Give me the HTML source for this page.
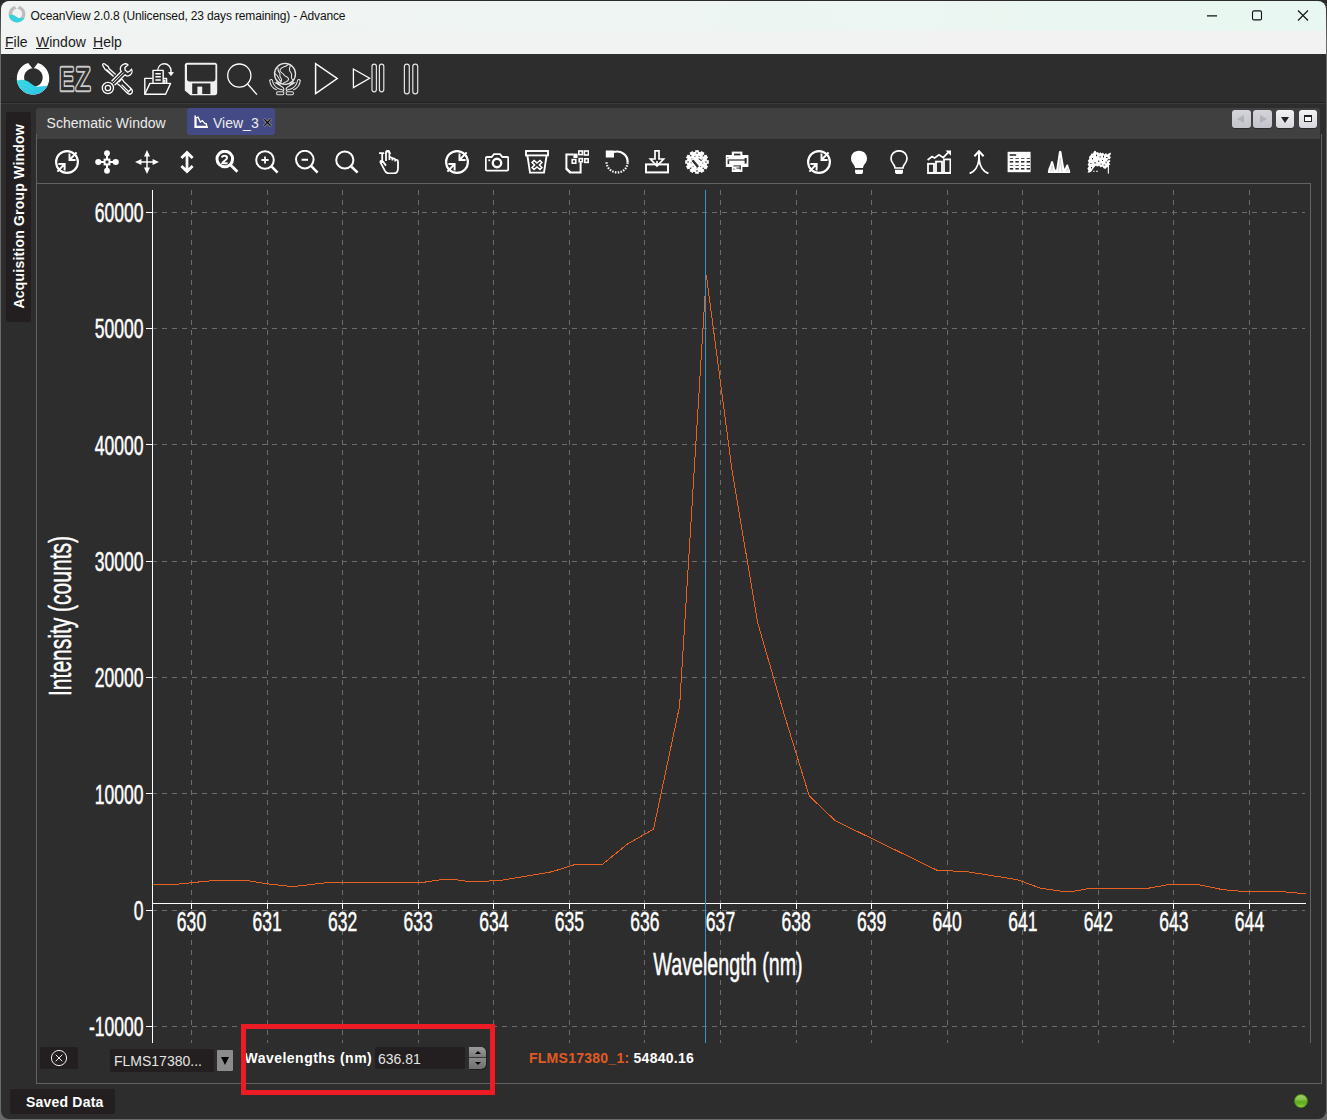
<!DOCTYPE html>
<html><head><meta charset="utf-8"><title>OceanView</title>
<style>
html,body{margin:0;padding:0}
body{width:1327px;height:1120px;overflow:hidden;background:linear-gradient(#2b2b2b 0,#2b2b2b 2px,#6a6a6a 40px,#6a6a6a 100%);font-family:"Liberation Sans",sans-serif;position:relative}
.abs{position:absolute}
#win{position:absolute;left:1px;top:1px;width:1325px;height:1118px;border-radius:8px;background:#2d2d2d;overflow:hidden}
#title{position:absolute;left:0;top:0;width:1325px;height:30px;background:linear-gradient(90deg,#f1f4f3 0%,#eef5f2 50%,#e8f7f1 100%)}
#title .t{position:absolute;left:29.6px;top:8px;font-size:12px;color:#111;white-space:nowrap;letter-spacing:-0.15px}
#menu{position:absolute;left:0;top:30px;width:1325px;height:23px;background:linear-gradient(90deg,#f0f3f2 0%,#f1f2f2 40%,#f2f2f2 100%)}
#menu span{position:absolute;top:3px;font-size:14px;color:#1a1a1a}
#menu u{text-decoration:underline;text-underline-offset:1px}
#tb{position:absolute;left:0;top:53px;width:1325px;height:48px;background:#2d2d2d;border-bottom:1px solid #222;box-shadow:0 1px 0 #3c3c3c}
#side{position:absolute;left:5px;top:111px;width:25px;height:210px;background:#231f20;border-radius:2px}
#side span{position:absolute;left:0;top:0;transform-origin:0 0;transform:translate(5px,196.5px) rotate(-90deg);font-weight:bold;font-size:14px;color:#fff;white-space:nowrap;letter-spacing:0.2px}
#tabs{position:absolute;left:35px;top:107px;width:1284px;height:31px;background:#404040;border-radius:3px 3px 0 0}
#panel{position:absolute;left:36px;top:138px;width:1285px;height:945px;background:#2d2d2d}
#tabs .tl{position:absolute;top:7px;font-size:14px;color:#ececec;white-space:nowrap}
#atab{position:absolute;left:151px;top:0;width:88px;height:27px;background:#444a85;border-radius:3px}
#atab .tl{top:7px}
.nb{position:absolute;top:2px;height:18px;background:linear-gradient(#d4d4da,#c4c4cc);border-radius:3px;box-shadow:0 1px 0 #2a2a2a}
.nb.w{background:linear-gradient(#f4f4f6,#d6d6dc)}
.nb i{position:absolute;display:block}
.tri-l{left:5px;top:5px;border:4px solid transparent;border-right:7px solid #b2b2b8;border-left:0}
.tri-r{left:7px;top:5px;border:4px solid transparent;border-left:7px solid #b2b2b8;border-right:0}
.tri-d{left:5px;top:7px;border:4px solid transparent;border-top:6px solid #222;border-bottom:0}
.sq{left:5px;top:5px;width:6px;height:4px;border:1px solid #222;border-top-width:2px;background:#fff}
.ln{background:#636363}
.ax{stroke:#fff;stroke-width:0.4px;vector-effect:non-scaling-stroke}
.chart{position:absolute;left:0;top:0}
.dk{background:#231f20;border-radius:2px}
</style></head><body>
<div id="win">
 <div id="title"><svg class="abs" style="left:1200px;top:5px" width="120" height="20" viewBox="0 0 120 20" fill="none" stroke="#111" stroke-width="1.1"><path d="M6 9.9H16"/><rect x="51.5" y="4.9" width="9" height="9" rx="1.5"/><path d="M97 4.5L107 14.5M107 4.5L97 14.5"/></svg>
<svg class="abs" style="left:6px;top:3px" width="20" height="20" viewBox="0 0 20 20"><defs><clipPath id="tc"><circle cx="10" cy="10" r="8.4"/></clipPath></defs><path fill="#bdbdbd" fill-rule="evenodd" d="M10 1.6a8.4 8.4 0 1 0 0.01 0ZM10.2 4.8a4.9 4.9 0 1 1 -0.01 0Z"/><path fill="#eff4f3" d="M6.8 1L10 5.2L13.2 1Z"/><g clip-path="url(#tc)"><path fill="#36d3df" d="M1 11.6C3.6 10.2 6 10.4 8.4 12C10.4 13.6 11.8 14.4 13.8 14.2C15.6 14 17 13.8 19 13.6V19H1Z"/></g></svg>
<span class="t">OceanView 2.0.8 (Unlicensed, 23 days remaining) - Advance</span></div>
 <div id="menu"><span style="left:4px"><u>F</u>ile</span><span style="left:35px"><u>W</u>indow</span><span style="left:92px"><u>H</u>elp</span></div>
 <div id="tb"><svg class="abs" style="left:-1px;top:0" width="430" height="48" viewBox="0 54 430 48" fill="none" stroke="#fff" stroke-width="1.4" font-family="'Liberation Sans', sans-serif">
<defs><linearGradient id="wv" x1="0" y1="0" x2="1" y2="1"><stop offset="0" stop-color="#35dce0"/><stop offset="1" stop-color="#2bbde8"/></linearGradient><clipPath id="lc"><circle cx="33" cy="78.4" r="16.2"/></clipPath></defs>
<g stroke="none" fill="#1c1c1c"><rect x="9.6" y="78" width="1.2" height="1.2"/><rect x="12" y="78" width="1.2" height="1.2"/></g>
<g stroke="none"><path fill="#fff" fill-rule="evenodd" d="M33 62.2a16.2 16.2 0 1 0 0.01 0ZM33.4 68.2a9.3 9.3 0 1 1 -0.01 0Z"/><path fill="#2d2d2d" d="M26.6 61L33.1 69.2L39.4 61Z"/><g clip-path="url(#lc)"><path fill="url(#wv)" d="M15 81.6C20 79 25 79 29.6 82.4C33.4 85.4 36 87.2 40 86.6C43.4 86.2 46.4 85.8 50 85.6V96H15Z"/><path d="M18 85C24 83 29 86 33 90M17 88C23 86 28 89 31 93" stroke="#5fe4ea" stroke-width="0.6" fill="none" opacity="0.7"/></g></g>
<text transform="translate(59.4,90.05) scale(0.676,1)" font-size="31.5" fill="#2d2d2d" stroke="#c8c8c8" stroke-width="4" stroke-linejoin="round" paint-order="stroke" vector-effect="non-scaling-stroke">E</text>
<text transform="translate(76.0,90.05) scale(0.73,1)" font-size="31.5" fill="#2d2d2d" stroke="#c8c8c8" stroke-width="4" stroke-linejoin="round" paint-order="stroke" vector-effect="non-scaling-stroke">Z</text>
<text transform="translate(59.4,90.05) scale(0.676,1)" font-size="31.5" fill="#2d2d2d" stroke="#2d2d2d" stroke-width="0.6" stroke-linejoin="round" vector-effect="non-scaling-stroke">E</text>
<text transform="translate(76.0,90.05) scale(0.73,1)" font-size="31.5" fill="#2d2d2d" stroke="#2d2d2d" stroke-width="0.6" stroke-linejoin="round" vector-effect="non-scaling-stroke">Z</text>
<g stroke-width="1.3"><path d="M102.6 65.2C102.2 64.2 103.4 63.2 104.4 63.8L108.4 66.6L109 68.6L115.6 74.6M113.6 76.4L107.2 70.2L105.2 69.6Z"/><path d="M102.6 65.2L105.2 69.6"/><path d="M118.6 82.2L121.4 79.4M117.2 83.4L119.6 85.4L127.2 93C128.6 94.4 130.4 94.4 131.6 93.2C132.8 92 132.6 90.2 131.4 89L123.6 81.4L122 79"/><path d="M121.6 84.6L128.4 91.4M127.4 92.8L131.2 89"/><path d="M111.6 81.2L121.2 71.4C119.6 69.4 120.2 66.6 122 65.2C123.8 63.8 126.4 63.4 128 65L125 67.4V69.9L127.6 72.2L130.3 70.7L131.4 69.2C132.6 70.6 132.2 73.2 130.4 74.8C128.8 76.2 126.6 76.4 125 74.8L114.6 85.2"/><path d="M112.8 83.4L123.6 72.6" stroke-width="1"/><circle cx="107.9" cy="88" r="5.6"/><circle cx="107.9" cy="88" r="2.7"/></g>
<g stroke-width="1.4" stroke-linejoin="round"><path d="M152.6 78.4H144.8V94.2M163.4 78.4H166.6V83"/><path d="M149.9 83.4H170.6L165.6 94.2H144.8Z"/><path d="M153 83V70.4H163.2V83"/><path d="M155.4 73.8H160.8M155.4 76.8H160.8M155.4 80H160.8" stroke-width="1.5"/><path d="M157.8 70.2C158 66 161 63.8 164.4 63.8C168 63.8 170.8 66.6 171 70.6V74.4"/><path d="M168.6 72.6L171 75.6L173.4 72.6Z" fill="#fff" stroke-width="0.8"/><path d="M163.6 79.4H165.6V83H163.6Z" fill="#e8e8e8" stroke="none"/></g>
<g stroke="none"><path fill="#f0f0f0" d="M187.2 62.8H214.8C216.2 62.8 217.2 63.8 217.2 65.2V92.8C217.2 94.2 216.2 95.2 214.8 95.2H190.4L184.8 90.6V65.2C184.8 63.8 185.8 62.8 187.2 62.8Z"/><path fill="#2d2d2d" d="M187 64.8H215.4V79C215.4 80.4 214.4 81.4 213 81.4H189.4C188 81.4 187 80.4 187 79Z"/><rect fill="#2d2d2d" x="192.2" y="83.4" width="18.2" height="10.6"/><rect fill="#f0f0f0" x="197.4" y="86.6" width="4.8" height="7.6"/></g>
<circle cx="239.3" cy="75.6" r="11.6" stroke-width="1.3"/><path d="M247.6 84L257 94.6" stroke-width="1.3"/>
<g stroke="#e6e6e6" stroke-width="1.05" stroke-linecap="round" stroke-linejoin="round"><circle cx="285" cy="73.9" r="10.5" stroke-width="1.3"/><path d="M288.6 64.4C287 65.6 285.6 66.4 283.4 67C281.6 67.6 280.6 68.6 280 70C279.6 71.4 280.6 72 281.6 72.6C283 73.4 283.6 74.4 284.6 75.6C285.8 76.6 287.6 77 288.4 78.4C289 79.6 287.8 80.8 286.4 81.6C285 82.4 283.6 82.6 283 83.6"/><path d="M278 68C277.6 70 278.6 71.6 279.6 72.8C280.4 74 279.6 75.2 280 76.4C280.4 77.6 281.6 78.4 281.6 79.8C281.6 81 281 81.8 280.6 82.6"/><path d="M290.4 65C290 67 289 68.6 289.6 70.4C290 72 291.4 72.6 291.6 74.2C291.8 75.8 291 77 291.6 78.4C292 79.4 292.8 79.8 293.2 80.2"/><path d="M275 73.6C276.6 74.6 277.6 75.8 278.4 77.4C279 78.8 279.4 80 280.6 81"/><path d="M269.8 80.4C270.6 79 272.6 79.4 272.6 81C273 84 274.6 86.4 277.6 88.2C280.6 89.8 283.6 89.6 283.8 91"/><path d="M269.8 80.4C270 84.6 272.6 88 276.4 89.8M275 82.6C277 83.8 279.6 85.6 281.6 86.4C283.4 87.2 284 88.4 283.8 90M276.4 82L280.4 85.2"/><path d="M300.2 80.4C299.4 79 297.4 79.4 297.4 81C297 84 295.4 86.4 292.4 88.2C289.4 89.8 286.4 89.6 286.2 91"/><path d="M300.2 80.4C300 84.6 297.4 88 293.6 89.8M295 82.6C293 83.8 290.4 85.6 288.4 86.4C286.6 87.2 286 88.4 286.2 90M293.6 82L289.6 85.2"/><rect x="276.6" y="91.8" width="7.2" height="2.9" rx="1.2"/><rect x="286.2" y="91.8" width="7.2" height="2.9" rx="1.2"/></g>
<path d="M315.6 63.6V93.6L337.2 78.5Z" stroke-width="1.5" stroke-linejoin="miter"/>
<path d="M353.4 69V87.6L369.6 78.2Z" stroke-width="1.3"/>
<g stroke="#e4e4e4" stroke-width="1.2"><rect x="372" y="64.2" width="4.4" height="27.6" rx="2.2"/><rect x="379.4" y="64.2" width="4.4" height="27.6" rx="2.2"/><rect x="404.4" y="64.2" width="4.9" height="29.6" rx="2.4"/><rect x="412.8" y="64.2" width="4.9" height="29.6" rx="2.4"/></g>
</svg></div>
 <div id="side"><span>Acquisition Group Window</span></div>
 <div id="tabs">
  <span class="tl" style="left:10.6px">Schematic Window</span>
  <div id="atab"><svg class="abs" style="left:7px;top:7px" width="15" height="14" viewBox="0 0 15 14"><path d="M1.2 0.5V12.3H14" fill="none" stroke="#fff" stroke-width="1.6"/><path d="M2 11.5V3L4 2.2L6.3 7L8.3 5.6L11 8.6L12.3 8.6L12.8 11.5Z" fill="none" stroke="#fff" stroke-width="1.3"/></svg><span class="tl" style="left:26px">View_3</span>
   <svg class="abs" style="left:76px;top:10px" width="9" height="9" viewBox="0 0 9 9"><path d="M1 1L8 8M8 1L1 8" stroke="#9a9a9a" stroke-width="2.6"/><path d="M1.3 1.3L7.7 7.7M7.7 1.3L1.3 7.7" stroke="#111" stroke-width="1.3"/></svg></div>
  <div class="nb" style="left:1196px;width:19px;border-radius:3px"><i class="tri-l"></i></div>
  <div class="nb" style="left:1216.5px;width:19px;border-radius:3px"><i class="tri-r"></i></div>
  <div class="nb w" style="left:1240px;width:18px"><i class="tri-d"></i></div>
  <div class="nb w" style="left:1263px;width:18px"><i class="sq"></i></div>
 </div>
 <div id="panel">
<svg class="abs" style="left:18px;top:11px" width="24" height="24" viewBox="0 0 24 24"><g fill="none" stroke="#fff" stroke-width="2" ><circle cx="12" cy="12" r="10.9" stroke-width="2.2"/><path d="M14.5 3.6V10H20.6M14.8 9.7L21.6 2.4M3.4 14H9.6V20.4M9.3 14.3L2.4 21.6"/></g></svg>
<svg class="abs" style="left:58px;top:11px" width="24" height="24" viewBox="0 0 24 24"><g fill="none" stroke="#fff" stroke-width="2" ><rect x="9.6" y="9.6" width="4.8" height="4.8"/></g><g fill="#fff"><ellipse cx="12" cy="3.2" rx="2.9" ry="3"/><rect x="11" y="5" width="2" height="4"/><ellipse cx="12" cy="20.8" rx="2.9" ry="3"/><rect x="11" y="15" width="2" height="4"/><ellipse cx="3.3" cy="12" rx="3.1" ry="2.9"/><rect x="5" y="11" width="4" height="2"/><ellipse cx="20.7" cy="12" rx="3.1" ry="2.9"/><rect x="15" y="11" width="4" height="2"/></g></svg>
<svg class="abs" style="left:98px;top:11px" width="24" height="24" viewBox="0 0 24 24"><g fill="none" stroke="#fff" stroke-width="1.5"><path d="M12 2V22M2 12H22"/></g><g fill="#fff"><path d="M12 0l3 6.4H9zM12 24l3-6.4H9zM0 12l6.4-3v6zM24 12l-6.4-3v6z"/></g></svg>
<svg class="abs" style="left:138px;top:11px" width="24" height="24" viewBox="0 0 24 24"><g fill="none" stroke="#fff" stroke-width="2.8" ><path d="M12 3V21M6.4 8L12 2.4L17.6 8M6.4 16L12 21.6L17.6 16"/></g></svg>
<svg class="abs" style="left:178px;top:11px" width="24" height="24" viewBox="0 0 24 24"><g fill="none" stroke="#fff" stroke-width="2" ><circle cx="9.8" cy="9" r="7.8" stroke-width="3"/><path d="M15.6 15L22.4 21.8" stroke-width="2.8"/><path d="M6.8 7.6C7.4 5.2 12 5 12 8C12 10 8.4 10.8 7.4 13.2H12.6" stroke-width="2"/></g></svg>
<svg class="abs" style="left:218px;top:11px" width="24" height="24" viewBox="0 0 24 24"><g fill="none" stroke="#fff" stroke-width="2" ><circle cx="10" cy="10" r="8.8"/><path d="M16.2 16.2L22.6 22.6" stroke-width="2.6"/><path d="M6.4 10H13.6M10 6.4V13.6" stroke-width="1.8"/></g></svg>
<svg class="abs" style="left:258px;top:11px" width="24" height="24" viewBox="0 0 24 24"><g fill="none" stroke="#fff" stroke-width="2" ><circle cx="9.8" cy="9.6" r="8.8"/><path d="M16.0 15.8L22.6 22.6" stroke-width="2.6"/><path d="M6.6 9.8H13" stroke-width="1.9"/></g></svg>
<svg class="abs" style="left:298px;top:11px" width="24" height="24" viewBox="0 0 24 24"><g fill="none" stroke="#fff" stroke-width="2" ><circle cx="9.8" cy="10" r="8.6"/><path d="M16.0 16.2L22.6 22.6" stroke-width="2.6"/></g></svg>
<svg class="abs" style="left:338px;top:11px" width="24" height="24" viewBox="0 0 24 24"><g fill="none" stroke="#fff" stroke-width="1.8" ><path d="M7.2 13V2.6M4 3.2H9M11 11V2.4C11 0.2 14.4 0.2 14.4 2.4V10M12.7 0.8L10 3.8M12.7 0.8L15.6 3.8M14.4 8.6C14.4 6.8 17.4 6.8 17.4 8.8V10.6M17.4 9.6C17.4 8 20.2 8 20.2 10V11.6M20.2 10.8C20.4 9.4 23 9.6 23 11.6V18C23 21 21.4 23.4 18.6 23.4H14C12 23.4 10.8 22.4 9.8 20.6L5.6 12.6C4.8 11 6.8 10 7.8 11.4L11 15.6"/></g></svg>
<svg class="abs" style="left:408px;top:11px" width="24" height="24" viewBox="0 0 24 24"><g fill="none" stroke="#fff" stroke-width="2" ><circle cx="12" cy="12" r="10.9" stroke-width="2.2"/><path d="M14.5 3.6V10H20.6M14.8 9.7L21.6 2.4M3.4 14H9.6V20.4M9.3 14.3L2.4 21.6"/></g></svg>
<svg class="abs" style="left:448px;top:11px" width="24" height="24" viewBox="0 0 24 24"><g fill="none" stroke="#fff" stroke-width="1.8" ><path d="M1.8 7H6.6L9 4.2H15L17.4 7H22.2C22.8 7 23.2 7.4 23.2 8V19.6C23.2 20.2 22.8 20.6 22.2 20.6H1.8C1.2 20.6 0.8 20.2 0.8 19.6V8C0.8 7.4 1.2 7 1.8 7Z"/><circle cx="12" cy="13" r="4.2" stroke-width="2.4"/></g><rect x="3.4" y="9.4" width="1.8" height="1.8" fill="#fff"/></svg>
<svg class="abs" style="left:488px;top:11px" width="24" height="24" viewBox="0 0 24 24"><g fill="none" stroke="#fff" stroke-width="1.9" ><rect x="1" y="1" width="22" height="4.4"/><path d="M2.4 5.4L5 22.6H19L21.6 5.4"/><path d="M9 10.4l3 2.6 3-2.6 2 2-2.6 2.6 2.6 2.6-2 2-3-2.6-3 2.6-2-2 2.6-2.6-2.6-2.6z" stroke-width="1.5"/></g></svg>
<svg class="abs" style="left:528px;top:11px" width="24" height="24" viewBox="0 0 24 24"><g fill="none" stroke="#fff" stroke-width="2" ><path d="M8.6 4.6H1.4V19L5 22.6H15.6V12.4"/><path d="M1.4 18.4L5.6 22.4" /></g><g fill="none" stroke="#fff" stroke-width="1.6" ><rect x="13.8" y="1" width="3.6" height="3.6"/><rect x="19.4" y="1" width="4" height="4"/><rect x="19.8" y="8.8" width="3.4" height="3.6"/><rect x="14.2" y="8.6" width="3.2" height="3.2"/><rect x="9.2" y="4.4" width="2.6" height="2.8"/><rect x="7.2" y="9.6" width="3.6" height="3.6"/></g></svg>
<svg class="abs" style="left:568px;top:11px" width="24" height="24" viewBox="0 0 24 24"><g fill="none" stroke="#fff" stroke-width="2" ><path d="M8 2.2C16 -0.4 23 5 22.6 12.4" stroke-width="2.2"/><path d="M22.6 12.4C22.4 19 17 23 11.4 22.4C5.6 21.8 1.4 17.4 1.6 11.6" stroke-width="2.2" stroke-dasharray="1.5 1.3"/></g><path d="M0.8 0.6L9 0.6V7.4H0.8z" fill="#fff"/></svg>
<svg class="abs" style="left:608px;top:11px" width="24" height="24" viewBox="0 0 24 24"><g fill="none" stroke="#fff" stroke-width="2" ><path d="M10 0.8H14V9H18.6L12 16L5.4 9H10z" stroke-width="1.7"/><rect x="1" y="14.4" width="22" height="8"/></g><path d="M12 11v4" stroke="#fff" stroke-width="1.6"/></svg>
<svg class="abs" style="left:648px;top:11px" width="24" height="24" viewBox="0 0 24 24"><circle cx="12" cy="12" r="10.4" fill="#fff"/><g fill="#fff"><rect x="10.2" y="0.2" width="3.6" height="3" transform="rotate(0 12 12)"/><rect x="10.2" y="0.2" width="3.6" height="3" transform="rotate(30 12 12)"/><rect x="10.2" y="0.2" width="3.6" height="3" transform="rotate(60 12 12)"/><rect x="10.2" y="0.2" width="3.6" height="3" transform="rotate(90 12 12)"/><rect x="10.2" y="0.2" width="3.6" height="3" transform="rotate(120 12 12)"/><rect x="10.2" y="0.2" width="3.6" height="3" transform="rotate(150 12 12)"/><rect x="10.2" y="0.2" width="3.6" height="3" transform="rotate(180 12 12)"/><rect x="10.2" y="0.2" width="3.6" height="3" transform="rotate(210 12 12)"/><rect x="10.2" y="0.2" width="3.6" height="3" transform="rotate(240 12 12)"/><rect x="10.2" y="0.2" width="3.6" height="3" transform="rotate(270 12 12)"/><rect x="10.2" y="0.2" width="3.6" height="3" transform="rotate(300 12 12)"/><rect x="10.2" y="0.2" width="3.6" height="3" transform="rotate(330 12 12)"/></g><g fill="#2d2d2d"><path d="M6.4 10.8l2.2-1 5.4 6.4-1.8 1.6z"/><path d="M14 8.2l3 2.2-.6.8-3-2.2z"/><rect x="11.5" y="2.3" width="1.1" height="1.6" transform="rotate(0 12 12)"/><rect x="11.5" y="2.3" width="1.1" height="1.6" transform="rotate(45 12 12)"/><rect x="11.5" y="2.3" width="1.1" height="1.6" transform="rotate(90 12 12)"/><rect x="11.5" y="2.3" width="1.1" height="1.6" transform="rotate(135 12 12)"/><rect x="11.5" y="2.3" width="1.1" height="1.6" transform="rotate(180 12 12)"/><rect x="11.5" y="2.3" width="1.1" height="1.6" transform="rotate(225 12 12)"/><rect x="11.5" y="2.3" width="1.1" height="1.6" transform="rotate(270 12 12)"/><rect x="11.5" y="2.3" width="1.1" height="1.6" transform="rotate(315 12 12)"/><rect x="11.6" y="5.6" width="0.9" height="0.9" transform="rotate(20 12 12)"/><rect x="11.6" y="5.6" width="0.9" height="0.9" transform="rotate(60 12 12)"/><rect x="11.6" y="5.6" width="0.9" height="0.9" transform="rotate(100 12 12)"/><rect x="11.6" y="5.6" width="0.9" height="0.9" transform="rotate(140 12 12)"/><rect x="11.6" y="5.6" width="0.9" height="0.9" transform="rotate(180 12 12)"/><rect x="11.6" y="5.6" width="0.9" height="0.9" transform="rotate(220 12 12)"/><rect x="11.6" y="5.6" width="0.9" height="0.9" transform="rotate(260 12 12)"/><rect x="11.6" y="5.6" width="0.9" height="0.9" transform="rotate(300 12 12)"/><rect x="11.6" y="5.6" width="0.9" height="0.9" transform="rotate(340 12 12)"/></g></svg>
<svg class="abs" style="left:688px;top:11px" width="24" height="24" viewBox="0 0 24 24"><g fill="#fff"><rect x="0.8" y="5" width="22.6" height="12" /><rect x="6.8" y="1.6" width="10.6" height="4"/><rect x="6.8" y="14" width="10.6" height="8"/></g><g fill="#2d2d2d"><rect x="9" y="3.6" width="6.4" height="1.8"/><rect x="2.6" y="9.4" width="19" height="1.2"/><rect x="2.6" y="10.6" width="1.6" height="3.4"/><rect x="19.6" y="8" width="2" height="5.6"/><rect x="2.4" y="7" width="1" height="1"/><rect x="8.4" y="15.4" width="7.6" height="1"/><rect x="8.4" y="18.6" width="1" height="1.2"/><rect x="11.4" y="17.6" width="4" height="1"/><rect x="14.6" y="16" width="1.2" height="3.6"/></g></svg>
<svg class="abs" style="left:770px;top:11px" width="24" height="24" viewBox="0 0 24 24"><g fill="none" stroke="#fff" stroke-width="2" ><circle cx="12" cy="12" r="10.9" stroke-width="2.2"/><path d="M14.5 3.6V10H20.6M14.8 9.7L21.6 2.4M3.4 14H9.6V20.4M9.3 14.3L2.4 21.6"/></g></svg>
<svg class="abs" style="left:810px;top:11px" width="24" height="24" viewBox="0 0 24 24"><path d="M12 0.8C7 0.8 4 4.4 4 8.4C4 11.4 5.6 13 6.8 14.8C7.6 16 8 17 8 18H16C16 17 16.4 16 17.2 14.8C18.4 13 20 11.4 20 8.4C20 4.4 17 0.8 12 0.8Z" fill="#fff"/><path d="M8 19.8H16V22C16 23.4 15 24 14 24H10C9 24 8 23.4 8 22Z" fill="#fff"/></svg>
<svg class="abs" style="left:850px;top:11px" width="24" height="24" viewBox="0 0 24 24"><path d="M12 0.8C7 0.8 4 4.4 4 8.4C4 11.4 5.6 13 6.8 14.8C7.6 16 8 17 8 18H16C16 17 16.4 16 17.2 14.8C18.4 13 20 11.4 20 8.4C20 4.4 17 0.8 12 0.8Z" fill="none" stroke="#fff" stroke-width="1.7"/><path d="M8 19.8H16V22C16 23.4 15 24 14 24H10C9 24 8 23.4 8 22Z" fill="#fff"/></svg>
<svg class="abs" style="left:890px;top:11px" width="24" height="24" viewBox="0 0 24 24"><g fill="none" stroke="#fff" stroke-width="1.8" ><rect x="1" y="13.8" width="6" height="9"/><rect x="9" y="11.6" width="6" height="11.2"/><rect x="17" y="9.4" width="6.4" height="13.4"/><path d="M0.4 23H24" /><path d="M0.6 10L5 6.6L7.6 8L12 4.8L16.2 7.6L22 1.6" stroke-width="1.7"/></g><path d="M18.6 0.4H24V5.8z" fill="#fff"/></svg>
<svg class="abs" style="left:930px;top:11px" width="24" height="24" viewBox="0 0 24 24"><g fill="none" stroke="#fff" stroke-width="1.9" ><path d="M12 1.6V10M7.4 6.2L12 1.2L16.6 6.2" stroke-width="2"/><path d="M12 9C11.4 16 7.6 21.6 2.6 23.4M12 9C12.6 16 16.4 21.6 21.4 23.4"/></g></svg>
<svg class="abs" style="left:970px;top:11px" width="24" height="24" viewBox="0 0 24 24"><rect x="0.6" y="1.8" width="23" height="20.4" fill="#fff"/><g fill="#2d2d2d"><rect x="2.6" y="4.2" width="6.6" height="1.6"/><rect x="2.8" y="8" width="3.4" height="0.8"/><rect x="2.8" y="11" width="3.4" height="1.6"/><rect x="2.8" y="15" width="3.4" height="0.8"/><rect x="2.8" y="18" width="3.4" height="1.6"/><rect x="8.399999999999999" y="8" width="3.4" height="0.8"/><rect x="8.399999999999999" y="11" width="3.4" height="1.6"/><rect x="8.399999999999999" y="15" width="3.4" height="0.8"/><rect x="8.399999999999999" y="18" width="3.4" height="1.6"/><rect x="14.0" y="8" width="3.4" height="0.8"/><rect x="14.0" y="11" width="3.4" height="1.6"/><rect x="14.0" y="15" width="3.4" height="0.8"/><rect x="14.0" y="18" width="3.4" height="1.6"/><rect x="19.599999999999998" y="8" width="3.4" height="0.8"/><rect x="19.599999999999998" y="11" width="3.4" height="1.6"/><rect x="19.599999999999998" y="15" width="3.4" height="0.8"/><rect x="19.599999999999998" y="18" width="3.4" height="1.6"/></g></svg>
<svg class="abs" style="left:1010px;top:11px" width="24" height="24" viewBox="0 0 24 24"><path d="M0.8 23L1.4 19L3.2 14.6L4.2 11.2H5.8L7 15L8 19.4L9.2 19.8L10.4 12L12 1.6L13.2 0.8L14.4 1.6L15.6 9L17 17L17.8 19L19 15.4L20 14.6H21L22 18L23.2 21V23Z" fill="#fff"/><path d="M3.6 21.6L5 15.6L6.2 21.6M11.4 21.6L13.2 8L15 21.6M19.4 21.6L20.5 18L21.4 21.6" stroke="#cfcfcf" stroke-width="0.9" fill="none"/></svg>
<svg class="abs" style="left:1050px;top:11px" width="24" height="24" viewBox="0 0 24 24"><path fill="#fff" d="M7 1.2L8.6 0.8L9.4 2.4L11 2L12 3.4L13.4 2.2L14.6 3.6L16 2.6L17.2 4.4L19 3L20 4.6L23.6 2.4L24 4L22.6 6L24 7.6L22 9.4L23.6 11L21.8 12.6L23.4 14.2L21.6 15.6V16.8L19.6 17.4L18.4 19L16.6 18.2L15.4 16.6L13.6 17.6L12.4 15.8L10.4 16.6L8.6 15.8L7 17.4L5.6 19.4L4.4 21.4L2.6 22.6H0.6L1.4 20.4L0.4 18.4L1.8 16.6L0.6 14.6L1.8 12.8L0.8 10.6L2.4 9L2 6.8L3.6 5.6L4.4 3.6L6 3.4Z"/><g fill="#2d2d2d"><rect x="9" y="4.6" width="1" height="1.6"/><rect x="12.6" y="6.4" width="1.2" height="1"/><rect x="16" y="5.6" width="1" height="1.8"/><rect x="19" y="7" width="1.6" height="1"/><rect x="5" y="8" width="1" height="1.4"/><rect x="11" y="10.6" width="1.4" height="1.2"/><rect x="15" y="10" width="1" height="1"/><rect x="7.6" y="12" width="1" height="1.6"/><rect x="18.6" y="11.6" width="1" height="1.6"/><rect x="3.4" y="13" width="1" height="1"/><rect x="13.6" y="13.6" width="1" height="1"/><rect x="20" y="9.6" width="2.4" height="0.9" transform="rotate(-40 21 10)"/><rect x="4" y="17" width="1" height="1.4"/><rect x="16.6" y="14.6" width="1.6" height="0.9"/></g><g fill="#fff"><rect x="20.8" y="15" width="1.1" height="8.6"/><rect x="6" y="20.8" width="1.6" height="0.9"/><rect x="9" y="20.8" width="2" height="0.9"/></g></svg>
  <div class="abs ln" style="left:-1px;top:-5px;width:1px;height:950px"></div>
  <div class="abs ln" style="left:1284px;top:-5px;width:1px;height:950px"></div>
  <div class="abs ln" style="left:-1px;top:944px;width:1286px;height:1px"></div>
  <div class="abs ln" style="left:0;top:44px;width:1274px;height:1px"></div>
  <div class="abs ln" style="left:1273px;top:44px;width:1px;height:860px"></div>
  <div class="abs dk" style="left:3px;top:908px;width:38px;height:22px"><svg class="abs" style="left:10px;top:2px" width="18" height="18" viewBox="0 0 18 18" fill="none" stroke="#f0f0f0" stroke-width="1"><circle cx="9" cy="9" r="7.6"/><path d="M5.7 5.7L12.3 12.3M12.3 5.7L5.7 12.3"/></svg></div>
  <div class="abs dk" style="left:73px;top:910px;width:104px;height:23px"><span class="abs" style="left:4px;top:4px;font-size:14px;color:#e4e4e4;white-space:nowrap">FLMS17380...</span></div>
  <div class="abs" style="left:180px;top:911px;width:16px;height:21px;background:#8c8c8c;border-radius:1px"><i class="abs" style="left:3.5px;top:7px;border:4.5px solid transparent;border-top:8px solid #000;border-bottom:0"></i></div>
  <span class="abs" style="left:207.5px;top:911px;font-size:14px;font-weight:bold;color:#fff;white-space:nowrap;letter-spacing:0.48px">Wavelengths (nm)</span>
  <div class="abs dk" style="left:338px;top:908px;width:90px;height:22px"><span class="abs" style="left:3px;top:4px;font-size:14px;color:#e4e4e4">636.81</span></div>
  <div class="abs" style="left:432px;top:908px;width:17px;height:11px;background:linear-gradient(#9c9c9c,#7c7c7c);border-radius:0 5px 0 0;border-bottom:1px solid #3a3a3a;box-sizing:border-box;box-shadow:1px 0 0 #1e1e1e"><i class="abs" style="left:5.5px;top:3.5px;border:3px solid transparent;border-bottom:3.5px solid #000;border-top:0"></i></div>
  <div class="abs" style="left:432px;top:919px;width:17px;height:11px;background:linear-gradient(#8a8a8a,#707070);border-radius:0 0 5px 0;box-shadow:1px 1px 0 #1e1e1e"><i class="abs" style="left:5.5px;top:4px;border:3px solid transparent;border-top:3.5px solid #000;border-bottom:0"></i></div>
  <span class="abs" style="left:492px;top:911px;font-size:14px;font-weight:bold;white-space:nowrap;color:#fff;letter-spacing:0.26px"><span style="color:#e05a24">FLMS17380_1:</span> 54840.16</span>
 </div>
 <div class="abs dk" style="left:9px;top:1088px;width:105px;height:25px"><span class="abs" style="left:16px;top:5px;font-size:14px;font-weight:bold;color:#fff;white-space:nowrap;letter-spacing:0.2px">Saved Data</span></div>
 <div class="abs" style="left:1292.5px;top:1092.5px;width:14px;height:14px;border-radius:50%;box-sizing:border-box;border:1px solid #4a8a16;background:linear-gradient(#9bd066 0%,#83c148 42%,#5fab20 50%,#68b428 78%,#9ddc42 100%)"></div>
</div>
<svg class="chart" width="1327" height="1120" viewBox="0 0 1327 1120" shape-rendering="crispEdges" fill="#fff" font-family="'Liberation Sans', sans-serif">
<line x1="191.5" y1="190" x2="191.5" y2="1043" stroke="#6c6c6c" stroke-dasharray="5 5"/>
<line x1="267.5" y1="190" x2="267.5" y2="1043" stroke="#6c6c6c" stroke-dasharray="5 5"/>
<line x1="342.5" y1="190" x2="342.5" y2="1043" stroke="#6c6c6c" stroke-dasharray="5 5"/>
<line x1="418.5" y1="190" x2="418.5" y2="1043" stroke="#6c6c6c" stroke-dasharray="5 5"/>
<line x1="493.5" y1="190" x2="493.5" y2="1043" stroke="#6c6c6c" stroke-dasharray="5 5"/>
<line x1="569.5" y1="190" x2="569.5" y2="1043" stroke="#6c6c6c" stroke-dasharray="5 5"/>
<line x1="644.5" y1="190" x2="644.5" y2="1043" stroke="#6c6c6c" stroke-dasharray="5 5"/>
<line x1="720.5" y1="190" x2="720.5" y2="1043" stroke="#6c6c6c" stroke-dasharray="5 5"/>
<line x1="796.5" y1="190" x2="796.5" y2="1043" stroke="#6c6c6c" stroke-dasharray="5 5"/>
<line x1="871.5" y1="190" x2="871.5" y2="1043" stroke="#6c6c6c" stroke-dasharray="5 5"/>
<line x1="947.5" y1="190" x2="947.5" y2="1043" stroke="#6c6c6c" stroke-dasharray="5 5"/>
<line x1="1022.5" y1="190" x2="1022.5" y2="1043" stroke="#6c6c6c" stroke-dasharray="5 5"/>
<line x1="1098.5" y1="190" x2="1098.5" y2="1043" stroke="#6c6c6c" stroke-dasharray="5 5"/>
<line x1="1173.5" y1="190" x2="1173.5" y2="1043" stroke="#6c6c6c" stroke-dasharray="5 5"/>
<line x1="1249.5" y1="190" x2="1249.5" y2="1043" stroke="#6c6c6c" stroke-dasharray="5 5"/>
<line x1="152" y1="1026.5" x2="1305" y2="1026.5" stroke="#6c6c6c" stroke-dasharray="5 5"/>
<line x1="146" y1="1026.5" x2="153" y2="1026.5" stroke="#fff"/>
<line x1="152" y1="910.5" x2="1305" y2="910.5" stroke="#6c6c6c" stroke-dasharray="5 5"/>
<line x1="146" y1="910.5" x2="153" y2="910.5" stroke="#fff"/>
<line x1="152" y1="793.5" x2="1305" y2="793.5" stroke="#6c6c6c" stroke-dasharray="5 5"/>
<line x1="146" y1="793.5" x2="153" y2="793.5" stroke="#fff"/>
<line x1="152" y1="677.5" x2="1305" y2="677.5" stroke="#6c6c6c" stroke-dasharray="5 5"/>
<line x1="146" y1="677.5" x2="153" y2="677.5" stroke="#fff"/>
<line x1="152" y1="561.5" x2="1305" y2="561.5" stroke="#6c6c6c" stroke-dasharray="5 5"/>
<line x1="146" y1="561.5" x2="153" y2="561.5" stroke="#fff"/>
<line x1="152" y1="444.5" x2="1305" y2="444.5" stroke="#6c6c6c" stroke-dasharray="5 5"/>
<line x1="146" y1="444.5" x2="153" y2="444.5" stroke="#fff"/>
<line x1="152" y1="328.5" x2="1305" y2="328.5" stroke="#6c6c6c" stroke-dasharray="5 5"/>
<line x1="146" y1="328.5" x2="153" y2="328.5" stroke="#fff"/>
<line x1="152" y1="212.5" x2="1305" y2="212.5" stroke="#6c6c6c" stroke-dasharray="5 5"/>
<line x1="146" y1="212.5" x2="153" y2="212.5" stroke="#fff"/>
<line x1="152.5" y1="190" x2="152.5" y2="1043" stroke="#fff"/>
<line x1="152" y1="903.5" x2="1306" y2="903.5" stroke="#fff"/>
<line x1="191.5" y1="903" x2="191.5" y2="909" stroke="#fff"/>
<line x1="267.5" y1="903" x2="267.5" y2="909" stroke="#fff"/>
<line x1="342.5" y1="903" x2="342.5" y2="909" stroke="#fff"/>
<line x1="418.5" y1="903" x2="418.5" y2="909" stroke="#fff"/>
<line x1="493.5" y1="903" x2="493.5" y2="909" stroke="#fff"/>
<line x1="569.5" y1="903" x2="569.5" y2="909" stroke="#fff"/>
<line x1="644.5" y1="903" x2="644.5" y2="909" stroke="#fff"/>
<line x1="720.5" y1="903" x2="720.5" y2="909" stroke="#fff"/>
<line x1="796.5" y1="903" x2="796.5" y2="909" stroke="#fff"/>
<line x1="871.5" y1="903" x2="871.5" y2="909" stroke="#fff"/>
<line x1="947.5" y1="903" x2="947.5" y2="909" stroke="#fff"/>
<line x1="1022.5" y1="903" x2="1022.5" y2="909" stroke="#fff"/>
<line x1="1098.5" y1="903" x2="1098.5" y2="909" stroke="#fff"/>
<line x1="1173.5" y1="903" x2="1173.5" y2="909" stroke="#fff"/>
<line x1="1249.5" y1="903" x2="1249.5" y2="909" stroke="#fff"/>
<polyline points="152.5,884.6 173.6,884.6 207.2,881.1 227,880 243.3,880 267,883.8 289.3,886.3 295.5,886.3 330.3,882.3 423.6,882.3 443.5,879.3 452.2,879.3 467.4,881.3 484.3,881.3 501.2,880.3 551.8,871.8 576.1,864.2 602.5,864.2 627.8,843.8 653.5,829.2 679.6,706 706.3,274.9 732,470 757.6,622.5 783,710.4 809.2,795.9 835.4,820.8 937.3,870.4 965.8,871.5 1017.2,879.6 1040.7,888.3 1065.3,891.7 1071.5,891.7 1090,888.3 1147.9,888.3 1170,884.3 1197.1,884.3 1221.8,889.5 1244,891.5 1279.7,891.5 1305.6,893.7" fill="none" stroke="#e96023" stroke-width="1" shape-rendering="crispEdges"/>
<line x1="705.5" y1="190" x2="705.5" y2="1043" stroke="#3793ce" stroke-width="1"/>
<text class="ax" transform="translate(143.5,1036.2) scale(0.64,1)" text-anchor="end" font-size="27.4">-10000</text>
<text class="ax" transform="translate(143.5,919.9) scale(0.64,1)" text-anchor="end" font-size="27.4">0</text>
<text class="ax" transform="translate(143.5,803.6) scale(0.64,1)" text-anchor="end" font-size="27.4">10000</text>
<text class="ax" transform="translate(143.5,687.2) scale(0.64,1)" text-anchor="end" font-size="27.4">20000</text>
<text class="ax" transform="translate(143.5,570.9) scale(0.64,1)" text-anchor="end" font-size="27.4">30000</text>
<text class="ax" transform="translate(143.5,454.6) scale(0.64,1)" text-anchor="end" font-size="27.4">40000</text>
<text class="ax" transform="translate(143.5,338.2) scale(0.64,1)" text-anchor="end" font-size="27.4">50000</text>
<text class="ax" transform="translate(143.5,221.9) scale(0.64,1)" text-anchor="end" font-size="27.4">60000</text>
<text class="ax" transform="translate(191.5,930.8) scale(0.64,1)" text-anchor="middle" font-size="27.4">630</text>
<text class="ax" transform="translate(267.1,930.8) scale(0.64,1)" text-anchor="middle" font-size="27.4">631</text>
<text class="ax" transform="translate(342.6,930.8) scale(0.64,1)" text-anchor="middle" font-size="27.4">632</text>
<text class="ax" transform="translate(418.2,930.8) scale(0.64,1)" text-anchor="middle" font-size="27.4">633</text>
<text class="ax" transform="translate(493.8,930.8) scale(0.64,1)" text-anchor="middle" font-size="27.4">634</text>
<text class="ax" transform="translate(569.3,930.8) scale(0.64,1)" text-anchor="middle" font-size="27.4">635</text>
<text class="ax" transform="translate(644.9,930.8) scale(0.64,1)" text-anchor="middle" font-size="27.4">636</text>
<text class="ax" transform="translate(720.5,930.8) scale(0.64,1)" text-anchor="middle" font-size="27.4">637</text>
<text class="ax" transform="translate(796.1,930.8) scale(0.64,1)" text-anchor="middle" font-size="27.4">638</text>
<text class="ax" transform="translate(871.6,930.8) scale(0.64,1)" text-anchor="middle" font-size="27.4">639</text>
<text class="ax" transform="translate(947.2,930.8) scale(0.64,1)" text-anchor="middle" font-size="27.4">640</text>
<text class="ax" transform="translate(1022.8,930.8) scale(0.64,1)" text-anchor="middle" font-size="27.4">641</text>
<text class="ax" transform="translate(1098.3,930.8) scale(0.64,1)" text-anchor="middle" font-size="27.4">642</text>
<text class="ax" transform="translate(1173.9,930.8) scale(0.64,1)" text-anchor="middle" font-size="27.4">643</text>
<text class="ax" transform="translate(1249.5,930.8) scale(0.64,1)" text-anchor="middle" font-size="27.4">644</text>
<text class="ax" transform="translate(728,974.6) scale(0.626,1)" text-anchor="middle" font-size="31.5">Wavelength (nm)</text>
<text class="ax" transform="translate(70.8,616) rotate(-90) scale(0.667,1)" text-anchor="middle" font-size="31.5">Intensity (counts)</text>
</svg>
<div class="abs" style="left:241px;top:1024px;width:244px;height:61px;border:5px solid #ed1c24"></div>
</body></html>
